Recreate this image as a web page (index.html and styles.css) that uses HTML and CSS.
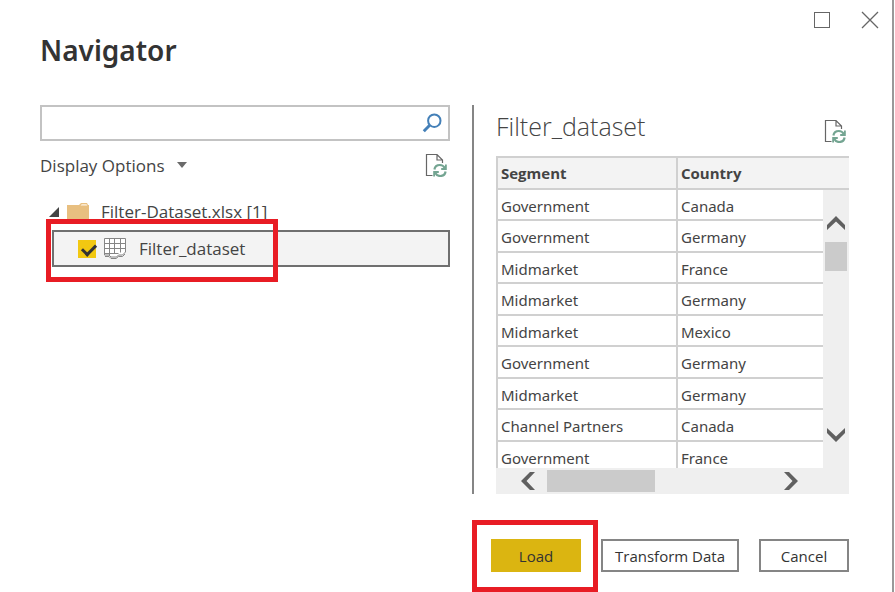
FILE: index.html
```html
<!DOCTYPE html>
<html lang="en">
<head>
<meta charset="utf-8">
<title>Navigator</title>
<link rel="stylesheet" href="styles.css">
</head>
<body>
<div class="dialog">
  <header class="titlebar">
    <h1>Navigator</h1>
    <div class="window-controls">
      <button class="icon-button" type="button" aria-label="Maximize">
        <svg width="18" height="18" viewBox="0 0 18 18" fill="none" stroke="#666" stroke-width="1"><rect x="1.500" y="1.500" width="15" height="15"/></svg>
      </button>
      <button class="icon-button" type="button" aria-label="Close">
        <svg width="18" height="18" viewBox="0 0 18 18" fill="none" stroke="#666" stroke-width="1.300"><path d="M1 1l16 16M17 1L1 17"/></svg>
      </button>
    </div>
  </header>

  <main class="content">
    <section class="sources">
      <div class="search">
        <input type="text" aria-label="Search">
        <button class="icon-button" type="button" aria-label="Run search">
          <svg width="20" height="20" viewBox="0 0 20 20" fill="none" stroke="#4480b8"><circle cx="12.300" cy="7.700" r="6.200" stroke-width="2"/><path d="M7.700 12.300L1.800 18.200" stroke-width="3"/></svg>
        </button>
      </div>
      <div class="options">
        <button class="display-options" type="button">Display Options
          <svg width="10" height="6" viewBox="0 0 10 6" fill="#6a6a6a"><path d="M0 0h10L5 6z"/></svg>
        </button>
        <button class="icon-button" type="button" aria-label="Refresh sources">
          <svg width="22" height="24" viewBox="0 0 22 24" fill="none"><path d="M7.500 22.500H1.500V1.500H12l5.500 5.500v3M12 1.500V7h5.500" stroke="#666" stroke-width="1.200"/><g stroke="#74a592" stroke-width="2.200"><path d="M9.400 16.500c.5-3 2.700-4.500 5.400-4.500 2.300 0 4 1.200 5 3"/><path d="M20.600 18.500c-.5 3-2.700 4.500-5.400 4.500-2.300 0-4-1.200-5-3"/><path d="M20.900 11.500v4.500h-4.700M9.100 23.500V19h4.700" stroke-width="1.800"/></g></svg>
        </button>
      </div>
      <div class="tree">
        <div class="tree-root">
          <svg width="10" height="10" viewBox="0 0 10 10" fill="#444"><path d="M10 0v10H0z"/></svg>
          <svg width="22" height="18" viewBox="0 0 22 18"><path d="M0 2h12l2-2h6l1 2h1v16H0z" fill="#e8bf80"/><path d="M13.500 2.500l1.200-1.300h4.800l.8 1.300z" fill="#fff6e8"/></svg>
          <span>Filter-Dataset.xlsx [1]</span>
        </div>
        <div class="tree-item">
          <input type="checkbox" id="dataset" checked>
          <label for="dataset">
            <svg width="22" height="21" viewBox="0 0 22 21" fill="none" stroke="#858585"><path d="M.5 .5h21v13.500l-3 3h-4l-2 2H7l-2-2H.5z" fill="#fff"/><path d="M.5 5.500h21M.5 10.500h21M5.500.5V17M10.500.5v15M16.500.5v14M.5 15.500h14"/><path d="M1 18.500h4l2 2h5l2.500-2h4l2.500-2.500"/></svg>
            Filter_dataset
          </label>
          <span class="callout callout-item"></span>
        </div>
      </div>
    </section>

    <section class="preview">
      <div class="preview-head">
        <h2>Filter_dataset</h2>
        <button class="icon-button" type="button" aria-label="Refresh preview">
          <svg width="22" height="24" viewBox="0 0 22 24" fill="none"><path d="M7.500 22.500H1.500V1.500H12l5.500 5.500v3M12 1.500V7h5.500" stroke="#666" stroke-width="1.200"/><g stroke="#74a592" stroke-width="2.200"><path d="M9.400 16.500c.5-3 2.700-4.500 5.400-4.500 2.300 0 4 1.200 5 3"/><path d="M20.600 18.500c-.5 3-2.700 4.500-5.400 4.500-2.300 0-4-1.200-5-3"/><path d="M20.900 11.500v4.500h-4.700M9.100 23.500V19h4.700" stroke-width="1.800"/></g></svg>
        </button>
      </div>
      <div class="grid">
        <div class="grid-view">
          <table>
            <thead><tr><th scope="col">Segment</th><th scope="col">Country</th></tr></thead>
            <tbody>
              <tr><td>Government</td><td>Canada</td></tr>
              <tr><td>Government</td><td>Germany</td></tr>
              <tr><td>Midmarket</td><td>France</td></tr>
              <tr><td>Midmarket</td><td>Germany</td></tr>
              <tr><td>Midmarket</td><td>Mexico</td></tr>
              <tr><td>Government</td><td>Germany</td></tr>
              <tr><td>Midmarket</td><td>Germany</td></tr>
              <tr><td>Channel Partners</td><td>Canada</td></tr>
              <tr><td>Government</td><td>France</td></tr>
            </tbody>
          </table>
        </div>
        <div class="scroll-y">
          <button class="icon-button" type="button" aria-label="Scroll up"><svg width="18" height="14" viewBox="0 0 18 14" fill="#606060"><path d="M9 0l9 9v5L9 5.500 0 14V9z"/></svg></button>
          <span class="thumb"></span>
          <button class="icon-button scroll-end" type="button" aria-label="Scroll down"><svg width="18" height="14" viewBox="0 0 18 14" fill="#606060"><path d="M9 14l9-9V0L9 8.500 0 0v5z"/></svg></button>
        </div>
        <div class="scroll-x">
          <button class="icon-button" type="button" aria-label="Scroll left"><svg width="14" height="18" viewBox="0 0 14 18" fill="#606060"><path d="M0 9l9-9h5L5.500 9l8.500 9H9z"/></svg></button>
          <span class="thumb"></span>
          <button class="icon-button scroll-end" type="button" aria-label="Scroll right"><svg width="14" height="18" viewBox="0 0 14 18" fill="#606060"><path d="M14 9L5 0H0l8.500 9L0 18h5z"/></svg></button>
        </div>
      </div>
    </section>
  </main>

  <footer class="actions">
    <div class="load">
      <button class="button primary" type="button">Load</button>
      <span class="callout callout-load"></span>
    </div>
    <button class="button transform" type="button">Transform Data</button>
    <button class="button" type="button">Cancel</button>
  </footer>
</div>
</body>
</html>
```
FILE: styles.css
```css
* {
  box-sizing: border-box;
}

body {
  margin: 0;
  background: #fff;
  color: #444;
  font-family: "Open Sans", "Noto Sans", sans-serif;
  font-size: 16px;
}

button,
input {
  margin: 0;
  font: inherit;
  color: inherit;
}

svg {
  display: block;
  flex: none;
}

.icon-button {
  display: block;
  flex: none;
  padding: 0;
  border: 0;
  background: none;
}

.dialog {
  display: flex;
  flex-direction: column;
  height: 100vh;
  min-height: 520px;
  margin-right: 1px;
  padding: 0 43px 20px 40px;
  border-right: 2px solid #999;
  overflow: hidden;
}

.titlebar {
  display: flex;
  justify-content: space-between;
  height: 105px;
  margin-right: -30px;
}

h1 {
  margin: 30px 0 0;
  color: #333;
  font-family: "Noto Sans", "Open Sans", sans-serif;
  font-size: 28px;
  font-weight: 600;
  line-height: 40px;
}

.window-controls {
  display: flex;
  align-items: flex-start;
  gap: 30px;
  padding-top: 11px;
}

.content {
  display: grid;
  grid-template-columns: minmax(0, 410fr) minmax(0, 377fr);
  column-gap: 22px;
  flex: 1;
  min-height: 0;
}

.search {
  display: flex;
  align-items: center;
  height: 36px;
  padding-right: 6px;
  border: 2px solid #c3c3c3;
}

.search input {
  flex: 1;
  min-width: 0;
  height: 100%;
  padding: 0 8px;
  border: 0;
  outline: 0;
  background: none;
}

.options {
  display: flex;
  align-items: center;
  justify-content: space-between;
  height: 48px;
  padding-right: 3px;
}

.display-options {
  display: flex;
  align-items: center;
  gap: 12px;
  padding: 0;
  border: 0;
  background: none;
  font-size: 17px;
}

.tree {
  padding-top: 12px;
  font-size: 17px;
}

.tree-root {
  display: flex;
  align-items: center;
  height: 29px;
  padding: 0 0 8px 9px;
}

.tree-root svg + svg {
  margin: 0 12px 0 8px;
}

.tree-item {
  position: relative;
  display: flex;
  align-items: center;
  height: 37px;
  margin-left: 12px;
  padding-left: 24px;
  border: 2px solid #6f6f6f;
  background: #f3f3f3;
}

.tree-item input {
  appearance: none;
  width: 18px;
  height: 18px;
  background: #f2c811;
}

.tree-item input:checked::before {
  content: "";
  display: block;
  width: 11px;
  height: 6px;
  margin: 4px;
  border: solid #333;
  border-width: 0 0 3px 3px;
  transform: rotate(-45deg);
}

.tree-item label {
  display: flex;
  align-items: center;
  gap: 13px;
  padding-left: 8px;
}

.callout {
  position: absolute;
  border: 5px solid #e81c24;
  pointer-events: none;
}

.callout-item {
  top: -13px;
  left: -8px;
  width: 232px;
  height: 63px;
}

.preview {
  display: flex;
  flex-direction: column;
  min-width: 0;
  min-height: 0;
  padding-left: 22px;
  border-left: 2px solid #858585;
}

.preview-head {
  display: flex;
  align-items: center;
  justify-content: space-between;
  height: 51px;
  padding-right: 3px;
}

.preview-head h2 {
  margin: 0;
  padding-bottom: 10px;
  font-size: 25px;
  font-weight: 300;
  line-height: 34px;
}

.grid {
  display: grid;
  grid-template: 34px minmax(0, 1fr) 26px / minmax(0, 1fr) 26px;
  flex: 1;
  min-height: 0;
}

.grid-view {
  grid-area: 1 / 1 / 3 / 3;
  overflow: hidden;
}

table {
  width: 100%;
  border-spacing: 0;
  table-layout: fixed;
  font-size: 15px;
  line-height: 20px;
}

th,
td {
  height: 31px;
  padding: 0 3px;
  border: solid #d0d0d0;
  border-width: 0 0 2px 2px;
  text-align: left;
}

td {
  padding-top: 2px;
  font-family: "Noto Sans", "Open Sans", sans-serif;
}

tbody tr:nth-child(even) td {
  height: 32px;
}

th {
  height: 34px;
  border-top-width: 2px;
  background: #f3f3f3;
}

th:first-child {
  width: 51%;
}

.scroll-y,
.scroll-x {
  display: flex;
  align-items: center;
  background: #efefef;
}

.scroll-y {
  grid-area: 2 / 2;
  flex-direction: column;
  padding: 26px 0;
}

.scroll-x {
  grid-area: 3 / 1 / 4 / 3;
  padding: 0 51px 0 25px;
}

.scroll-end {
  margin-top: auto;
}

.scroll-x .scroll-end {
  margin: 0 0 0 auto;
}

.thumb {
  flex: none;
  background: #cbcbcb;
}

.scroll-y .thumb {
  width: 22px;
  height: 29px;
  margin-top: 12px;
}

.scroll-x .thumb {
  width: 108px;
  height: 22px;
  margin-left: 12px;
}

.actions {
  display: flex;
  justify-content: flex-end;
  gap: 20px;
  padding-top: 45px;
}

.load {
  position: relative;
}

.button {
  width: 90px;
  height: 33px;
  padding: 0;
  border: 2px solid #858585;
  background: #fff;
  color: #333;
  font-size: 15px;
}

.button.primary {
  border-color: #dbb511;
  background: #dbb511;
}

.button.transform {
  width: 138px;
}

.callout-load {
  top: -19px;
  left: -19px;
  width: 126px;
  height: 72px;
}
```
